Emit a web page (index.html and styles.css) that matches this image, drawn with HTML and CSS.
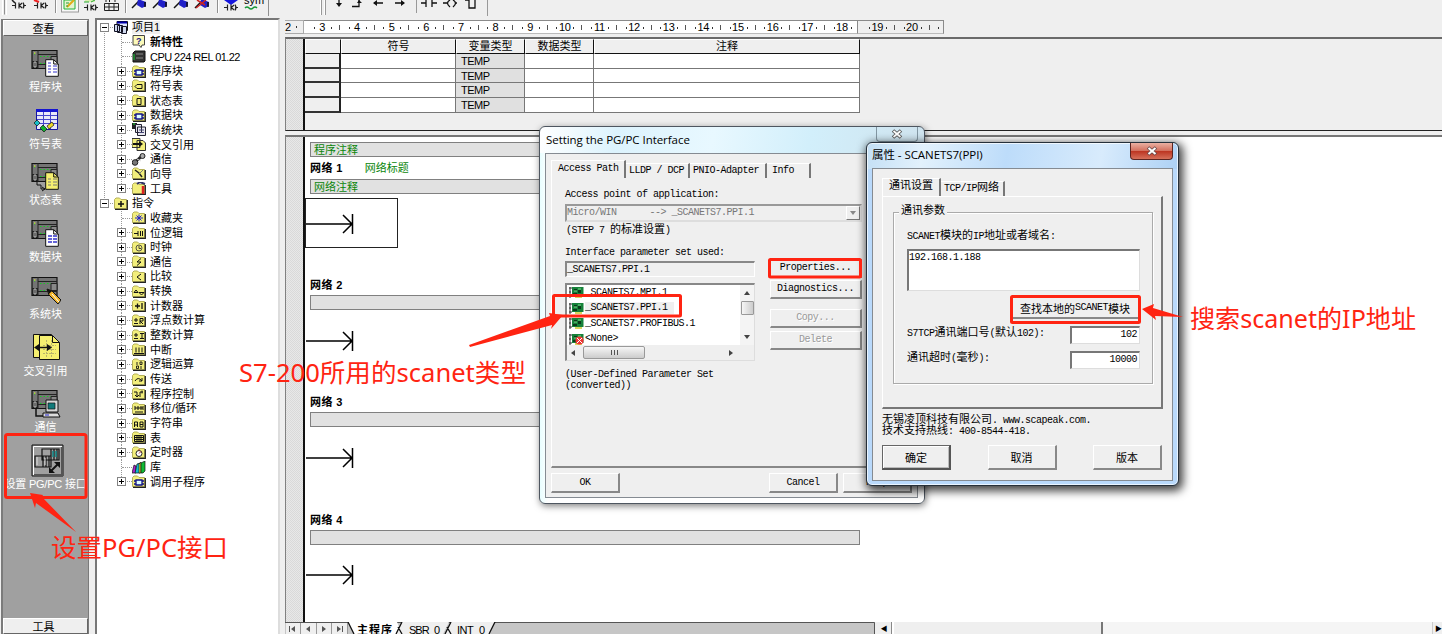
FILE: index.html
```html
<!DOCTYPE html>
<html lang="zh-CN">
<head>
<meta charset="utf-8">
<title>STEP 7-Micro/WIN</title>
<link rel="stylesheet" href="styles.css">
</head>
<body>
<svg class="defs" aria-hidden="true">
  <defs>
    <symbol id="folder" viewBox="0 0 14 13"><path d="M.5 11.5V2.5L2 1h3.500L7 2.500h5.500v9z" fill="#f2ee7c" stroke="#b5b05a"/><path d="M13.300 3v9.500H1" fill="none" stroke="#222" stroke-width="1.300"/></symbol>
    <symbol id="plus" viewBox="0 0 9 9"><rect x=".5" y=".5" width="8" height="8" fill="#fff" stroke="#848484"/><path d="M2 4.500h5M4.500 2v5" stroke="#000"/></symbol>
    <symbol id="minus" viewBox="0 0 9 9"><rect x=".5" y=".5" width="8" height="8" fill="#fff" stroke="#848484"/><path d="M2 4.500h5" stroke="#000"/></symbol>
    <symbol id="plc" viewBox="0 0 30 30"><path d="M1 1.500h25v18H1z" fill="#747474" stroke="#111" stroke-width="1.200"/><path d="M7 1v19M7 5.500h19M7 15.500h19" stroke="#222"/><path d="M1 12h6v7H1z" fill="#222"/><path d="M3 13v5h2v-5z" fill="none" stroke="#ddd" stroke-width=".8"/><path d="M3.500 4v2M9 7.500h11M9 14.500h8" stroke="#17c924" stroke-dasharray="1.500 2"/><path d="M3 4h1.500" stroke="#ffef3a"/><path d="M20 7.500h6v7h-6z" fill="#888" stroke="#222"/></symbol>
    <symbol id="doc" viewBox="0 0 14 18"><path d="M.7.7h8L13.300 5v12.300H.7z" fill="currentColor" stroke="#111"/><path d="M8.700.7V5h4.600" fill="none" stroke="#111"/></symbol>
    <symbol id="ladder" viewBox="0 0 14 9"><path d="M0 4.500h3M3.500 1.500v6M7.500 4.500L10 2M7.500 4.500L10 7M7 1.500v6M11 1.500q2 3 0 6M12.500 4.500h1.500" fill="none" stroke="#222" stroke-width="1.200"/></symbol>
    <symbol id="pin" viewBox="0 0 18 12"><path d="M1 9L9 1" stroke="#111" stroke-width="1.500"/><path d="M7 0l8 3v4l-4 2-5-3z" fill="#2020c8"/><path d="M14 3v5" stroke="#111" stroke-width="1.500"/></symbol>
    <symbol id="rung" viewBox="0 0 48 20"><path d="M0 10h47M46.500 0v20M37 1l9 9-9 9" fill="none" stroke="#000" stroke-width="1.500"/></symbol>
    <symbol id="card" viewBox="0 0 15 11"><path d="M1 0v11M0 1h3M0 5h2M0 9h3" stroke="#333"/><path d="M3 0h11.500v9H3z" fill="#16813a"/><path d="M5 2h3v2H5zM9 3h3v3H9zM4 6h4v2H4z" fill="#0b3a1a"/><path d="M5 4h3M9 2h3" stroke="#7ae087"/><path d="M6 10h7" stroke="#c8c828" stroke-width="1.500"/></symbol>
  </defs>
</svg>

<div class="app">
  <header class="toolbar">
    <svg class="strip-a" width="270" height="17" viewBox="0 0 270 17">
      <path d="M4.500 0v14.500M55.500 0v13M125.500 0v13M217.500 0v13M268.500 0v16" stroke="#909090"/><path d="M2.500 0v15M6.500 0v15M56.500 0v13M126.500 0v13M218.500 0v13" stroke="#fff"/>
      <use href="#ladder" x="12" y="1" width="14" height="9"/><use href="#ladder" x="34" y="1" width="14" height="9"/>
      <path d="M34 0l5 2" stroke="#e22" stroke-width="2"/><path d="M12 0l3 3" stroke="#222" stroke-width="1.500"/>
      <rect x="61.500" y="-1" width="17" height="13" fill="#f7f7f7" stroke="#9a9a9a"/><path d="M64 0h11v9H64z" fill="#e6f3cf" stroke="#22b33a"/><path d="M67 7l7-7" stroke="#e2ad16" stroke-width="2"/><path d="M66 3h3M66 6h2" stroke="#2c9b37"/>
      <use href="#ladder" x="84" y="3" width="14" height="9"/><path d="M85 0h10v2H85z" fill="#d9efb1"/><path d="M84 2h5M91 2l4-2" stroke="#29a836"/>
      <path d="M104.500 3.500h14v7h-14zM104.500 7h14M109 3.500v7M114 3.500v7M106 0v2M110 2q-2-1 0-2M115 0v2" stroke="#222" fill="none"/>
      <use href="#pin" x="131" y="-1" width="18" height="12"/><use href="#pin" x="152" y="-1" width="18" height="12"/><use href="#pin" x="173" y="-1" width="18" height="12"/><use href="#pin" x="194" y="-1" width="18" height="12"/>
      <path d="M196 8l10-8M197 0l8 5" stroke="#c22" stroke-width="1.500"/>
      <path d="M224 0h14l-7 5z" fill="#1616dd"/><use href="#ladder" x="224" y="3" width="14" height="9"/>
      <text x="244" y="4" class="sym">sym</text><path d="M245 8q2-2 4 0t4 0 4 0" stroke="#159734" fill="none" stroke-width="1.500"/>
    </svg>
    <svg class="strip-b" width="170" height="17" viewBox="320 0 170 17">
      <path d="M321.500 0v15M325.500 0v15M416.500 0v13M487.500 0v16" stroke="#999"/><path d="M320.500 0v15M324.500 0v15" stroke="#fff"/>
      <path d="M339 0v4M352 6.500h7V0M374 3h9M395 3h9M421 3h5M426 0v7M432 0v7M432 3h5M443 3h4M450 0q-5 3 0 7M453 0q5 3 0 7M456 3h1M465 0h4v8h6V0" stroke="#111" fill="none" stroke-width="1.300"/>
      <path d="M336 3h6l-3 4zM357 3l2-3 3 3zM377 0v6l-4-3zM401 0v6l4-3z" fill="#111"/>
    </svg>
  </header>

  <main class="workspace">
    <nav class="views">
      <div class="views-head">查看</div>
      <div class="views-list">
        <a class="view"><svg width="30" height="30" viewBox="0 0 30 30"><use href="#plc" width="30" height="30"/><use href="#doc" x="14" y="10" width="14" height="18" color="#fff"/><path d="M17 17h3M22 17h4M17 20h3M22 20h4M17 23h3M22 23h4M17 14h3" stroke="#33c"/></svg><span>程序块</span></a>
        <a class="view"><svg width="30" height="30" viewBox="0 0 30 30"><path d="M5.500 3.500h21v20h-21z" fill="#e8e8f8" stroke="#1414a0"/><path d="M5 4.500h22" stroke="#1414d0" stroke-width="3"/><path d="M6 9.500h20M6 13.500h20M6 17.500h20M12.500 6v17M19.500 6v17" stroke="#44c"/><path d="M3 17l3-3 3 3-3 3z" fill="#16c0c8" stroke="#111" stroke-width=".7"/><path d="M9 22l3-3 4 4-3 3z" fill="#12b030" stroke="#111" stroke-width=".7"/><path d="M16 20l5-4 2 3-5 4z" fill="#ecd827" stroke="#111" stroke-width=".7"/></svg><span>符号表</span></a>
        <a class="view"><svg width="30" height="30" viewBox="0 0 30 30"><use href="#plc" width="30" height="30"/><use href="#doc" x="14" y="10" width="14" height="18" color="#f5ef70"/><path d="M17 17h3M22 17h4M17 20h3M22 20h4M17 23h3M22 23h4" stroke="#777"/><path d="M6 20v3h4v4h4M11 25l3 2-3 2" fill="none" stroke="#111"/></svg><span>状态表</span></a>
        <a class="view"><svg width="30" height="30" viewBox="0 0 30 30"><use href="#plc" width="30" height="30"/><use href="#doc" x="14" y="10" width="14" height="18" color="#fff"/><path d="M17 17h4M22 17h4M17 20h4M22 20h4M17 23h4M22 23h4" stroke="#33c" stroke-width="1.300"/></svg><span>数据块</span></a>
        <a class="view"><svg width="30" height="30" viewBox="0 0 30 30"><use href="#plc" width="30" height="30"/><path d="M16 13l5 2 9 9-3 4-9-9z" fill="#f3b62c" stroke="#111"/><path d="M16 13l5 2-3 3z" fill="#111"/><path d="M21 18l7 8" stroke="#fff"/></svg><span>系统块</span></a>
        <a class="view"><svg width="30" height="30" viewBox="0 0 30 30"><path d="M2.500 1.500h18v23h-18z" fill="#f5ef70" stroke="#111"/><path d="M8.500 2.500h13l7 7v17h-20z" fill="#f5ef70" stroke="#111"/><path d="M21.500 2.500v7h7" fill="none" stroke="#111"/><path d="M12 12.500h13M12 16.500h13M12 20.500h13M15.500 7v17M20.500 7v17" stroke="#b9b46a" stroke-dasharray="2 1"/><path d="M5 14.500h14" stroke="#111" stroke-width="1.500"/><path d="M8 11v7l-5-3.500zM16 11v7l5-3.500z" fill="#111"/></svg><span>交叉引用</span></a>
        <a class="view"><svg width="30" height="30" viewBox="0 0 30 30"><use href="#plc" width="30" height="30"/><path d="M5 20v7h10" stroke="#111" fill="none" stroke-width="1.500"/><path d="M15 11h12v12H15z" fill="#d6d6d6" stroke="#111"/><path d="M17 14h7v6h-7z" fill="#107a7a" stroke="#111" stroke-width=".7"/><path d="M12 24h15l2 4H12z" fill="#ddd" stroke="#111"/><path d="M14 26h4" stroke="#22c"/></svg><span>通信</span></a>
        <a class="view"><svg width="34" height="34" viewBox="0 0 34 34"><path d="M1 1h31v31H1z" fill="#a0a0a0" stroke="#111"/><path d="M2.500 31V2.500H31" fill="none" stroke="#fff"/><path d="M31 3v28H3" fill="none" stroke="#555" stroke-width="2"/><path d="M11 5h17v11H11zM20 5v11M23 5v11M26 5v11M4 12h16v11H4zM12 12v11M15 12v11M18 12v11" fill="none" stroke="#111" stroke-width="1.200"/><path d="M22 7v6M25 7v6" stroke="#188" stroke-width="1.500"/><path d="M6 13v8M14 14v7" stroke="#ddd"/><path d="M19 28l9-9" stroke="#111" stroke-width="2"/><path d="M23 18h6v6zM18 23v6h6z" fill="#111"/></svg><span>设置 PG/PC 接口</span></a>
      </div>
      <div class="views-head">工具</div>
    </nav>

    <aside class="tree">
      <div class="branch root">
        <div class="row top"><svg class="tg"><use href="#minus"/></svg><svg class="ic"  viewBox="0 0 14 13"><path d="M3 .5h10.500v9H3z" fill="#dde6ff" stroke="#111"/><path d="M3 1.500h10" stroke="#00a" stroke-width="2"/><path d="M.5 3.500h5v7h-5zM3.500 4.500h5v7h-5zM7.500 5.500h5v7h-5z" fill="#cfd8ee" stroke="#112"/></svg><span class="lit">项目1</span></div>
        <div class="branch">
        <div class="row"><svg class="tg"></svg><svg class="ic" viewBox="0 0 14 13"><path d="M1 .5h11.500V10H10l-1 2.500L7 10H1z" fill="#fbf9b9" stroke="#444"/><text x="4" y="9" class="glyph">?</text></svg><span class="bold">新特性</span></div>
        <div class="row"><svg class="tg"></svg><svg class="ic" viewBox="0 0 14 13"><path d="M1 3l2-2h10v10l-1 1H1z" fill="#333" stroke="#111"/><path d="M4 4h7M4 8h7" stroke="#888"/><path d="M2 4v6" stroke="#1c3"/></svg><span class="cpu">CPU 224 REL 01.22</span></div>
        <div class="row"><svg class="tg"><use href="#plus"/></svg><svg class="ic" viewBox="0 0 14 13"><use href="#folder"/><path d="M4 5h6v5H4zM2 6h2M2 9h2M10 6h2M10 9h2" fill="#dff" stroke="#118" stroke-width="1.300"/></svg><span>程序块</span></div>
        <div class="row"><svg class="tg"><use href="#plus"/></svg><svg class="ic" viewBox="0 0 14 13"><use href="#folder"/><path d="M3 7.500L5 5.500h5v4H5z" fill="none" stroke="#111"/></svg><span>符号表</span></div>
        <div class="row"><svg class="tg"><use href="#plus"/></svg><svg class="ic" viewBox="0 0 14 13"><use href="#folder"/><path d="M5 4.500h4v6H5z" fill="none" stroke="#111"/></svg><span>状态表</span></div>
        <div class="row"><svg class="tg"><use href="#plus"/></svg><svg class="ic" viewBox="0 0 14 13"><use href="#folder"/><path d="M4 5h6v5H4zM2 6h2M2 9h2M10 6h2M10 9h2" fill="#dff" stroke="#118" stroke-width="1.300"/></svg><span>数据块</span></div>
        <div class="row"><svg class="tg"><use href="#plus"/></svg><svg class="ic" viewBox="0 0 14 13"><path d="M0 0h5v6H0z" fill="#222"/><path d="M1 1h2" stroke="#1d3"/><path d="M3.500 1.500h6v8h-6zM5.500 4h8v8.500h-8z" fill="#e6e6ee" stroke="#223"/><path d="M7 7h5M7 9.500h5" stroke="#447"/></svg><span>系统块</span></div>
        <div class="row"><svg class="tg"><use href="#plus"/></svg><svg class="ic" viewBox="0 0 14 13"><path d="M0 .5h8v9H0zM5 2.500h6l2.500 2.500v7.500H5z" fill="#f2ee7c" stroke="#333"/><path d="M1 6h8" stroke="#111" stroke-width="2"/><path d="M7 3v6l4-3z" fill="#111"/></svg><span>交叉引用</span></div>
        <div class="row"><svg class="tg"><use href="#plus"/></svg><svg class="ic" viewBox="0 0 14 13"><path d="M2 10l9-8" stroke="#222" stroke-width="3"/><circle cx="10.500" cy="3" r="2.500" fill="#aaa" stroke="#222"/><circle cx="3" cy="9.500" r="2.800" fill="#777" stroke="#222"/><path d="M5 6l4 2" stroke="#ddd"/></svg><span>通信</span></div>
        <div class="row"><svg class="tg"><use href="#plus"/></svg><svg class="ic" viewBox="0 0 14 13"><use href="#folder"/><path d="M3 3l4 3 3 4" fill="none" stroke="#222" stroke-width="1.500"/><path d="M11 3L7 7" stroke="#777"/></svg><span>向导</span></div>
        <div class="row"><svg class="tg"><use href="#plus"/></svg><svg class="ic" viewBox="0 0 14 13"><use href="#folder"/><path d="M5 2l3-2 5 2" stroke="#336" stroke-width="2" fill="none"/><path d="M11 4v8" stroke="#d22" stroke-width="2.500"/></svg><span>工具</span></div>
        </div>
      </div>
      <div class="branch root last">
        <div class="row top"><svg class="tg"><use href="#minus"/></svg><svg class="ic" viewBox="0 0 14 13"><use href="#folder"/><path d="M4 7h6M7 4v6" stroke="#111" stroke-width="1.500"/></svg><span>指令</span></div>
        <div class="branch">
        <div class="row"><svg class="tg"></svg><svg class="ic" viewBox="0 0 14 13"><use href="#folder"/><path d="M3 7h8M7 3.500v7M4.500 4.500l5 5M9.500 4.500l-5 5" stroke="#22c"/></svg><span>收藏夹</span></div>
        <div class="row"><svg class="tg"><use href="#plus"/></svg><svg class="ic" viewBox="0 0 14 13"><use href="#folder"/><path d="M2 7.500h4M6 5v5M8.500 5v5M10.500 5v5" stroke="#111"/></svg><span>位逻辑</span></div>
        <div class="row"><svg class="tg"><use href="#plus"/></svg><svg class="ic" viewBox="0 0 14 13"><use href="#folder"/><circle cx="7" cy="7" r="3" fill="none" stroke="#554"/><path d="M7 5v2.500h2" fill="none" stroke="#443"/></svg><span>时钟</span></div>
        <div class="row"><svg class="tg"><use href="#plus"/></svg><svg class="ic" viewBox="0 0 14 13"><use href="#folder"/><path d="M9 3.500L5 7h4l-4 3.500" fill="none" stroke="#111"/></svg><span>通信</span></div>
        <div class="row"><svg class="tg"><use href="#plus"/></svg><svg class="ic" viewBox="0 0 14 13"><use href="#folder"/><path d="M9 4L5 7l4 3" fill="none" stroke="#111"/></svg><span>比较</span></div>
        <div class="row"><svg class="tg"><use href="#plus"/></svg><svg class="ic" viewBox="0 0 14 13"><use href="#folder"/><path d="M2 7.500h4L4 5zM7 7.500h5L9.500 10z" fill="none" stroke="#111"/></svg><span>转换</span></div>
        <div class="row"><svg class="tg"><use href="#plus"/></svg><svg class="ic" viewBox="0 0 14 13"><use href="#folder"/><path d="M3 7h5M5.500 4.500v5M10 4v6" stroke="#111" stroke-width="1.300"/></svg><span>计数器</span></div>
        <div class="row"><svg class="tg"><use href="#plus"/></svg><svg class="ic" viewBox="0 0 14 13"><use href="#folder"/><path d="M2 6h4M4 4v4M2 9.500h4M8 10V4.500h3v2.500H8l3 3" fill="none" stroke="#111"/></svg><span>浮点数计算</span></div>
        <div class="row"><svg class="tg"><use href="#plus"/></svg><svg class="ic" viewBox="0 0 14 13"><use href="#folder"/><path d="M2 6h4M4 4v4M2 9.500h4M8 4.500h4M8 9.500h4M10 4.500v5" stroke="#111"/></svg><span>整数计算</span></div>
        <div class="row"><svg class="tg"><use href="#plus"/></svg><svg class="ic" viewBox="0 0 14 13"><use href="#folder"/><path d="M4 4.500v5M7 4.500v5M10 4.500v5M2 10.500h10" stroke="#111"/></svg><span>中断</span></div>
        <div class="row"><svg class="tg"><use href="#plus"/></svg><svg class="ic" viewBox="0 0 14 13"><use href="#folder"/><path d="M5 4v3M8 4h2v2.500H8zM4.500 8h2v2.500h-2zM9 8v3" fill="none" stroke="#111" stroke-width=".9"/></svg><span>逻辑运算</span></div>
        <div class="row"><svg class="tg"><use href="#plus"/></svg><svg class="ic" viewBox="0 0 14 13"><use href="#folder"/><path d="M3 8q3-5 7 0M10 5v3H7" fill="none" stroke="#111"/></svg><span>传送</span></div>
        <div class="row"><svg class="tg"><use href="#plus"/></svg><svg class="ic" viewBox="0 0 14 13"><use href="#folder"/><path d="M2 5h3v5M3 8l2 2 2-2M8 10V5h3M10 3.500v3" fill="none" stroke="#111"/></svg><span>程序控制</span></div>
        <div class="row"><svg class="tg"><use href="#plus"/></svg><svg class="ic" viewBox="0 0 14 13"><use href="#folder"/><path d="M3 4v4M6 4v4M9 4v4M11 4v4M3 6h8M3 10h8" stroke="#111"/></svg><span>移位/循环</span></div>
        <div class="row"><svg class="tg"><use href="#plus"/></svg><svg class="ic" viewBox="0 0 14 13"><use href="#folder"/><path d="M2.500 10V5h3v5M2.500 8h3M8 5h3v5H8zM8 7.500h3" fill="none" stroke="#111"/></svg><span>字符串</span></div>
        <div class="row"><svg class="tg"><use href="#plus"/></svg><svg class="ic" viewBox="0 0 14 13"><use href="#folder"/><path d="M2.500 4.500h9v6h-9zM2.500 6.500h9M2.500 8.500h9M5 4v6M7 4v6M9 4v6" fill="none" stroke="#111"/></svg><span>表</span></div>
        <div class="row"><svg class="tg"><use href="#plus"/></svg><svg class="ic" viewBox="0 0 14 13"><use href="#folder"/><circle cx="7" cy="7.500" r="3" fill="#fff" stroke="#222"/><path d="M7 7.500l2-2M7 3v1.500" stroke="#b22"/></svg><span>定时器</span></div>
        <div class="row"><svg class="tg"></svg><svg class="ic" viewBox="0 0 14 13"><path d="M0 12l2-8 2 1v7z" fill="#a2c" stroke="#111" stroke-width=".7"/><path d="M3 12l2-9 3-1v10z" fill="#1bc" stroke="#111" stroke-width=".7"/><path d="M7 12V3l2-2v11z" fill="#ee3" stroke="#111" stroke-width=".7"/><path d="M9 12V2l4-2v10l-2 2z" fill="#1b3" stroke="#111" stroke-width=".7"/></svg><span>库</span></div>
        <div class="row"><svg class="tg"><use href="#plus"/></svg><svg class="ic" viewBox="0 0 14 13"><use href="#folder"/><path d="M4 5h6v5H4zM2 6h2M2 9h2M10 6h2M10 9h2" fill="#dff" stroke="#118" stroke-width="1.300"/></svg><span>调用子程序</span></div>
        </div>
      </div>
    </aside>

    <section class="editor">
      <div class="ruler">
        <div class="r-left"><span>2</span><i></i></div>
        <div class="r-main"><b>3</b><b>4</b><b>5</b><b>6</b><b>7</b><b>8</b><b>9</b><b>10</b><b>11</b><b>12</b><b>13</b><b>14</b><b>15</b><b>16</b><b>17</b><b>18</b></div>
        <div class="r-rest"><b>19</b><b>20</b><i></i></div>
      </div>
      <div class="pane vars">
        <div class="gutter"></div>
        <div class="grid">
          <div class="h"></div><div class="h">符号</div><div class="h">变量类型</div><div class="h">数据类型</div><div class="h">注释</div>
          <div class="n"></div><div></div><div class="t">TEMP</div><div></div><div></div>
          <div class="n"></div><div></div><div class="t">TEMP</div><div></div><div></div>
          <div class="n"></div><div></div><div class="t">TEMP</div><div></div><div></div>
          <div class="n"></div><div></div><div class="t">TEMP</div><div></div><div></div>
        </div>
      </div>
      <div class="pane code">
        <div class="gutter"></div>
        <div class="networks">
          <div class="bar first">程序注释</div>
          <div class="net one"><h4>网络 1<span>网络标题</span></h4><div class="bar">网络注释</div><div class="cursor"><svg width="48" height="20"><use href="#rung"/></svg></div></div>
          <div class="net"><h4>网络 2</h4><div class="bar"></div><svg width="48" height="20"><use href="#rung"/></svg></div>
          <div class="net"><h4>网络 3</h4><div class="bar"></div><svg width="48" height="20"><use href="#rung"/></svg></div>
          <div class="net"><h4>网络 4</h4><div class="bar"></div><svg width="48" height="20"><use href="#rung"/></svg></div>
        </div>
      </div>
      <footer class="tabs">
        <svg width="590" height="12" viewBox="286 622 590 12">
          <path d="M286 622h590v12H286z" fill="#c6c6c6"/><path d="M286 622.500h589.500V634" fill="none" stroke="#555"/>
          <path d="M287 623h62v11h-62z" fill="#efefef"/><path d="M301.500 623v11M317.500 623v11M332.500 623v11M348.500 623v11" stroke="#999"/>
          <path d="M296 626v6l-4-3zM311 626v6l-4-3zM323 626v6l4-3zM338 626v6l4-3z" fill="#555"/><path d="M290.500 626v6M343.500 626v6" stroke="#555"/>
          <path d="M349 622l6 12h48l-5-12z" fill="#fff"/><path d="M397 634l6-12h47l-6 12zM446 634l6-12h44l-6 12z" fill="#efefef"/><path d="M349 622l6 12M397 634l6-12M399 627l4 7M446 634l6-12M448 627l4 7M490 634l6-12" fill="none" stroke="#111" stroke-width="1.300"/>
          <text x="358" y="634" class="tab-main" textLength="35">主程序</text><text x="410" y="634" class="tab" textLength="31">SBR_0</text><text x="458" y="634" class="tab" textLength="28">INT_0</text>
        </svg>
        <div class="scroll"><span class="sb">◀</span><span class="thumb"></span><span class="track"></span><span class="sb">▶</span></div>
      </footer>
    </section>
  </main>

  <section class="window access">
    <div class="caption"><span>Setting the PG/PC Interface</span><div class="close"><svg width="12" height="10" viewBox="0 0 12 10"><path d="M2 1.500l8 7M10 1.500l-8 7" stroke="#555" stroke-width="3.600"/><path d="M2.500 2l7 6M9.500 2l-7 6" stroke="#fff" stroke-width="1.700"/></svg></div></div>
    <div class="client">
      <div class="tabbar"><span class="on">Access Path</span><span>LLDP / DCP</span><span>PNIO-Adapter</span><span class="w">Info</span></div>
      <div class="page">
        <p class="l1">Access point of application:</p>
        <div class="combo"><pre>Micro/WIN      --&gt; _SCANETS7.PPI.1</pre><i></i></div>
        <p class="l2">(STEP 7 <em>的标准设置</em>)</p>
        <div class="cols">
          <div class="left">
            <p class="l3">Interface parameter set used:</p>
            <div class="field">_SCANETS7.PPI.1</div>
            <div class="list">
              <ul><li><svg width="15" height="11"><use href="#card"/></svg>_SCANETS7.MPI.1</li><li class="sel"><svg width="15" height="11"><use href="#card"/></svg><b>_SCANETS7.PPI.1</b></li><li><svg width="15" height="11"><use href="#card"/></svg>_SCANETS7.PROFIBUS.1</li><li><svg width="15" height="11" viewBox="0 0 15 11"><use href="#card"/><circle cx="10.500" cy="6.500" r="4" fill="#e33"/><path d="M8 4l5 5M13 4L8 9" stroke="#fff"/></svg>&lt;None&gt;</li></ul>
              <div class="vs"><i class="up"></i><i class="vt"></i><i class="dn"></i></div>
              <div class="hs"><i class="lf"></i><i class="ht"></i><i class="rt"></i></div>
            </div>
            <p class="l4">(User-Defined Parameter Set<br>(converted))</p>
          </div>
          <div class="side"><button>Properties...</button><button>Diagnostics...</button><button class="off">Copy...</button><button class="off">Delete</button></div>
        </div>
      </div>
      <div class="actions"><button>OK</button><button class="cancel">Cancel</button><button>Help</button></div>
    </div>
  </section>

  <section class="window props">
    <div class="caption"><span>属性 - SCANETS7(PPI)</span><div class="close"><svg width="12" height="10" viewBox="0 0 12 10"><path d="M2 1.500l8 7M10 1.500l-8 7" stroke="#6b4a4a" stroke-width="3.600"/><path d="M2.500 2l7 6M9.500 2l-7 6" stroke="#fff" stroke-width="2"/></svg></div></div>
    <div class="client">
      <div class="tabbar"><span class="on"><em>通讯设置</em></span><span>TCP/IP<em>网络</em></span></div>
      <div class="page">
        <div class="group"><span class="legend"><em>通讯参数</em></span>
          <p class="g1">SCANET<em>模块的</em>IP<em>地址或者域名</em>:</p>
          <div class="area">192.168.1.188</div>
          <button class="find"><em>查找本地的</em>SCANET<em>模块</em></button>
          <div class="line"><span>S7TCP<em>通讯端口号</em>(<em>默认</em>102):</span><div class="num">102</div></div>
          <div class="line"><span><em>通讯超时</em>(<em>毫秒</em>):</span><div class="num">10000</div></div>
        </div>
      </div>
      <p class="about"><em>无锡凌顶科技有限公司</em>. www.scapeak.com.<br><em>技术支持热线</em>: 400-8544-418.</p>
      <div class="actions"><button class="def"><em>确定</em></button><button><em>取消</em></button><button><em>版本</em></button></div>
    </div>
  </section>

  <svg class="notes" width="1442" height="634" viewBox="0 0 1442 634">
    <g fill="none" stroke="#ff2412" stroke-width="3"><rect x="5.500" y="434.500" width="80.500" height="63" rx="2"/><rect x="553.500" y="295.500" width="127" height="20.500" rx="1"/><rect x="769.500" y="259.500" width="91" height="17.500" rx="1"/><rect x="1011.500" y="296.500" width="128" height="26" rx="1"/></g>
    <g fill="#ff2412"><path d="M30 493l13 2-1 2 34 35-40-29-1 5z"/><path d="M563 315l-14-2 1 3-81 29 1 2 82-22-1 4z"/><path d="M1142 309l12-5-1 4 30 9-28-1 1 4z"/>
    <text x="51" y="557" textLength="177" lengthAdjust="spacingAndGlyphs">设置PG/PC接口</text><text x="239" y="382" textLength="287" lengthAdjust="spacingAndGlyphs">S7-200所用的scanet类型</text><text x="1190" y="328" textLength="226" lengthAdjust="spacingAndGlyphs">搜索scanet的IP地址</text></g>
  </svg>
</div>
</body>
</html>
```
FILE: styles.css
```css
* { box-sizing: border-box; }
body { margin: 0; overflow: hidden; background: #efefef; color: #000; font: 11px/14px "Liberation Sans", "Noto Sans CJK SC", sans-serif; }
p, h4, ul, pre { margin: 0; padding: 0; font: inherit; }
i, em { font-style: normal; }
.defs { position: absolute; width: 0; height: 0; }
.app { position: relative; width: 1442px; height: 634px; display: flex; flex-direction: column; overflow: hidden; }

.toolbar { height: 17px; display: flex; gap: 50px; flex: none; }
.toolbar svg { display: block; flex: none; }
.sym { font: 11px "Liberation Sans", sans-serif; }

.workspace { flex: 1; min-height: 0; display: flex; }

/* Navigation bar */
.views { width: 88px; margin: 2px 0 0 1px; border: solid #7b7b7b; border-width: 1px 1px 0 2px; display: flex; flex-direction: column; flex: none; }
.views-head { height: 16px; line-height: 16px; text-align: center; background: #efefef; border: 1px solid #fff; border-right-color: #666; border-bottom: 1px solid #666; flex: none; padding-right: 4px; }
.views-head:last-child { line-height: 17px; }
.views-list { flex: 1; background: #a0a0a0; padding-top: 1px; overflow: hidden; }
.view { height: 56.750px; display: flex; flex-direction: column; align-items: center; justify-content: flex-end; color: #fff; }
.view svg { display: block; flex: none; }
.view span { line-height: 14px; white-space: nowrap; margin-top: 1px; }
.view:last-child span { margin-top: -1px; letter-spacing: -.2px; }
.view:last-child svg { margin-left: 4px; }

/* Project tree */
.tree { width: 185px; margin: 1px 0 0 6px; border: solid #777; border-width: 2px 0 0 2px; border-right: 2px solid #ddd; background: #fff; flex: none; padding-left: 3px; overflow: hidden; }
.row { height: 14.660px; display: flex; align-items: center; white-space: nowrap; position: relative; }
.row .tg { width: 9px; height: 9px; flex: none; position: relative; z-index: 1; }
.row .ic { width: 14px; height: 13px; margin: 0 4px 0 6px; flex: none; position: relative; }
.row.top .ic { margin-right: 4px; margin-left: 5px; }
.row::before { content: ""; position: absolute; left: 5px; top: 7px; width: 10px; border-top: 1px dotted #999; }
.branch .branch { margin-left: 13px; padding-left: 4px; }
.branch .branch .row::after { content: ""; position: absolute; left: 4px; top: 0; height: 15px; border-left: 1px dotted #999; }
.branch .branch .row:last-child::after { height: 7px; }
.root { position: relative; }
.root:first-child::before { content: ""; position: absolute; left: 4px; top: 8px; height: 172px; border-left: 1px dotted #999; }
.lit { background: #efefef; line-height: 13px; }
.bold { font-weight: 700; }
.cpu { letter-spacing: -.55px; }
.glyph { font: bold 9px "Liberation Sans", sans-serif; fill: #118; }

/* Editor */
.editor { flex: 1; min-width: 0; margin-left: 5px; display: flex; flex-direction: column; }
.ruler { display: flex; height: 14px; margin-top: 3px; font-size: 11px; line-height: 14px; }
.r-left { width: 19px; border: 1px solid #aaa; border-width: 1px 1px 1px 0; display: flex; align-items: center; gap: 5px; }
.r-left i { width: 1px; height: 2px; background: #333; }
.r-main, .r-rest { display: flex; border: 1px solid #8a8a8a; border-left: 0; border-bottom-color: #bbb; overflow: hidden; }
.r-main { width: 554px; background: #fff; padding-left: 1px; }
.r-rest { width: 86px; padding-left: 2px; }
.r-rest i { width: 1px; height: 2px; margin: 6px 0 0 9px; background: #333; }
.ruler b { width: 34.650px; flex: none; font-weight: 400; text-align: center; line-height: 13px; letter-spacing: -.2px; background: linear-gradient(#333, #333) 9px 6px / 1px 2px no-repeat, linear-gradient(#333, #333) 26px 6px / 1px 2px no-repeat, linear-gradient(#555, #555) 34px 4px / 1px 5px no-repeat; }
.pane { display: flex; border-left: 1px solid #808080; flex: none; }
.gutter { width: 19px; background: repeating-conic-gradient(#d9d9d9 0 25%, #e8e8e8 0 50%) 0 0 / 2px 2px; border-right: 2px solid #111; flex: none; }
.vars { height: 94px; margin-top: 3px; border-top: 2px solid #6a6a6a; border-bottom: 1px solid #222; }
.grid { display: grid; grid-template-columns: 36px 115px 69px 69px 266px; grid-template-rows: 15px 14.700px 14.700px 14.700px 14.700px; align-content: start; }
.grid > div { background: #fff; border-right: 1px solid #777; border-bottom: 1px solid #777; line-height: 14px; }
.grid > .h { background: #efefef; border-right: 1.500px solid #111; border-bottom: 1.500px solid #111; border-top: 1px solid #fff; border-left: 1px solid #fff; text-align: center; line-height: 13px; }
.grid > .n { background: #efefef; border-right: 2px solid #222; border-bottom: 2px solid #333; }
.grid > .t { background: #e0e0e0; padding-left: 5px; letter-spacing: -.5px; }
.code { flex: 1; margin-top: 4px; background: #fff; border-top: 2px solid #777; min-height: 0; overflow: hidden; }
.networks { padding: 5px 0 0 5px; flex: 1; }
.bar { width: 550px; height: 15px; border: 1px solid #808080; background: #e1e1e1; color: #0a860a; line-height: 14px; padding-left: 3px; }
.net { height: 117.300px; }
.net h4 { font-weight: 700; height: 17px; line-height: 14px; white-space: pre; letter-spacing: .4px; }
.net h4 span { color: #0a860a; font-weight: 400; margin-left: 22px; letter-spacing: 0; }
.net > svg { display: block; margin: 20.500px 0 0 -4px; }
.net.one { padding-top: 4px; height: 121.200px; }
.net.one h4 { height: 18px; }
.cursor { width: 93px; height: 50px; margin: 4px 0 0 -5px; border: 1px solid #222; padding-top: 15px; }
.cursor svg { display: block; }
.tabs { height: 12px; display: flex; flex: none; }
.tabs > svg { flex: none; }
.tab-main { font: 700 11px "Noto Sans CJK SC", sans-serif; }
.tab { font: 11px "Liberation Sans", sans-serif; }
.scroll { flex: 1; display: flex; margin-left: 2px; background: #f5f5f5; font-size: 7px; line-height: 13px; }
.sb { width: 15px; text-align: center; background: #efefef; border-right: 1px solid #888; }
.scroll .sb:last-child { width: 10px; border-left: 1px solid #ccc; border-right: 0; padding-left: 2px; }
.thumb { width: 211px; background: #efefef; border-left: 2px solid #fff; border-right: 2px solid #777; }
.track { flex: 1; }

/* Dialogs */
.window { position: absolute; border: 1px solid #4e5660; border-radius: 6px; font: 10px/12px "Liberation Mono", "Noto Sans CJK SC", monospace; letter-spacing: -.5px; }
.window em { font: 11px/0 "Noto Sans CJK SC", sans-serif; letter-spacing: 0; }
.caption { font: 11.500px/26px "Open Sans", "Noto Sans CJK SC", sans-serif; letter-spacing: -.05px; display: flex; justify-content: space-between; }
.close { display: flex; justify-content: center; align-items: center; }
.client { border: 1px solid #858b92; background: #efefef; }
.window button { display: flex; align-items: center; justify-content: center; padding: 0; margin: 0; font: inherit; letter-spacing: inherit; color: #000; background: #efefef; border: 1px solid #fff; border-right: 2px solid #888; border-bottom: 2px solid #888; white-space: nowrap; }
.tabbar { display: flex; align-items: flex-end; }
.tabbar span { border-top: 1px solid #fff; border-right: 2px solid #777; height: 15px; line-height: 14px; white-space: nowrap; padding-left: 3px; }
.tabbar .on { border-left: 1px solid #fff; height: 18px; line-height: 16px; }

.access { left: 539px; top: 126px; width: 386px; height: 378px; background: linear-gradient(100deg, #fff, #dcf3fd 20%, #e8f8ff 45%, #d2effb 70%, #cfe3ee) 0 0 / 100% 26px no-repeat, linear-gradient(90deg, #e8feff, #fff 8px); box-shadow: 1px 2px 7px rgba(0,0,0,.5); }
.access .caption { height: 26px; padding-left: 6px; }
.access .close { width: 42px; height: 15px; margin-right: 6px; border: 1px solid #8296a2; border-top: 0; border-radius: 0 0 4px 4px; }
.access .client { margin: 0 6px 0 5px; height: 345px; padding-left: 5px; }
.access .tabbar { height: 24px; }
.access .tabbar .on { width: 75px; padding-left: 6px; }
.access .tabbar span:nth-child(2) { width: 64px; }
.access .tabbar span:nth-child(3) { width: 77px; }
.access .tabbar .w { width: 44px; padding-left: 5px; }
.access .page { height: 290px; margin-right: 6px; border-left: 1px solid #fff; border-bottom: 2px solid #888; padding: 11px 0 0 13px; }
.combo { width: 297px; height: 18px; margin-top: 3px; border: 2px solid #999; border-right-color: #ddd; border-bottom-color: #ddd; color: #777; display: flex; justify-content: space-between; line-height: 14px; }
.combo i { width: 14px; border: 1px solid #fff; border-right-color: #777; border-bottom-color: #777; display: flex; align-items: center; justify-content: center; }
.combo i::before { content: ""; border: 3px solid transparent; border-top: 4px solid #888; border-bottom: 0; }
.l1 { height: 12px; }
.l2 { height: 12px; margin-top: 3px; padding-left: 1px; }
.cols { display: flex; margin-top: 10px; }
.left { width: 190px; }
.l3 { height: 12px; }
.field { height: 16px; margin-top: 2px; border: 2px solid #888; border-right: 1px solid #fff; border-bottom: 1px solid #fff; line-height: 13px; }
.list { height: 78px; margin-top: 6px; border: 2px solid #888; border-right: 1px solid #ddd; border-bottom: 1px solid #ddd; background: #fff; display: grid; grid-template-columns: 1fr 14px; grid-template-rows: 60px 1fr; }
.list ul { list-style: none; overflow: hidden; padding-left: 2px; }
.list li { height: 15.500px; display: flex; align-items: center; gap: 1px; }
.list li b { font-weight: 400; background: #efefef; padding-right: 6px; }
.vs { background: #f4f4f4; display: flex; flex-direction: column; align-items: center; }
.vs i, .hs i { display: block; flex: none; }
.up { border: 3px solid transparent; border-bottom: 4px solid #444; border-top: 0; margin-top: 6px; }
.dn { border: 3px solid transparent; border-top: 4px solid #444; border-bottom: 0; margin-top: 20px; }
.vt { width: 13px; height: 14px; margin-top: 6px; border: 1px solid #999; background: linear-gradient(90deg, #f6f6f6, #ccc); border-radius: 1px; }
.hs { grid-column: 1 / 3; background: #efefef; display: flex; align-items: center; padding: 0 21px 0 4px; }
.lf { border: 3px solid transparent; border-right: 4px solid #444; border-left: 0; }
.rt { border: 3px solid transparent; border-left: 4px solid #444; border-right: 0; margin-left: auto; }
.ht { width: 62px; height: 13px; margin-left: 8px; border: 1px solid #999; border-radius: 2px; background: repeating-linear-gradient(90deg, #555 0 1px, transparent 1px 3px) 27px 3px / 8px 5px no-repeat, linear-gradient(#f6f6f6, #ccc); }
.l4 { margin-top: 8px; line-height: 11px; white-space: nowrap; }
.side { margin-left: 15px; padding-top: 12px; }
.side button { width: 92px; height: 19px; }
.side button:nth-child(2) { margin-top: 2px; }
.side button:nth-child(3) { margin-top: 10px; }
.side button:nth-child(4) { margin-top: 3px; }
.side .off { color: #999; text-shadow: 1px 1px #fff; }
.access .actions { display: flex; margin-top: 5px; }
.access .actions button { width: 69px; height: 20px; }
.access .cancel { margin: 0 5px 0 149px; }

.props { left: 866px; top: 142px; width: 313px; height: 344px; background: linear-gradient(100deg, #c3dff5, #e2f1fc 18%, #bddcfa 45%, #d8ebfc 75%, #add1f5) 0 0 / 100% 26px no-repeat, #b9d9fb; border-color: #26303a; box-shadow: 2px 3px 10px 2px rgba(0,0,0,.75), inset 0 0 0 1px rgba(255,255,255,.7); }
.props .caption { height: 25px; line-height: 23px; padding-left: 5px; font-size: 11.500px; letter-spacing: -.05px; }
.props .close { width: 43px; height: 17px; margin-right: 5px; border: 1px solid #5b2521; border-top: 0; border-radius: 0 0 4px 4px; background: linear-gradient(#eab0a2, #d3715f 48%, #bb3320 50%, #d6705a); }
.props .client { margin: 0 5px; height: 313px; padding: 0 9px; }
.props .tabbar { height: 27px; }
.props .tabbar .on { width: 59px; padding-left: 6px; }
.props .tabbar span:nth-child(2) { width: 64px; }
.props .page { height: 213px; border: 1px solid #fff; border-right: 2px solid #777; border-bottom: 2px solid #777; padding: 15px 8px 0 10px; }
.group { height: 172px; border: 1px solid #aaa; box-shadow: inset 1px 1px #fff, 1px 1px #fff; padding: 0 12px 0 13px; position: relative; display: flex; flex-direction: column; }
.legend { position: absolute; left: 5px; top: -7px; background: #efefef; padding: 0 2px; }
.g1 { height: 12px; margin-top: 18px; white-space: nowrap; }
.area { height: 42px; margin-top: 6px; background: #fff; border: 2px solid #777; border-right: 1px solid #ddd; border-bottom: 1px solid #ddd; line-height: 13px; }
.window .find { width: 129px; height: 22px; margin-top: 6px; align-self: flex-end; }
.line { height: 19px; margin-top: 7px; display: flex; justify-content: space-between; line-height: 16px; }
.line + .line { margin-top: 6px; }
.num { width: 70px; height: 18px; background: #fff; border: 2px solid #777; border-right: 1px solid #ddd; border-bottom: 1px solid #ddd; text-align: right; padding-right: 2px; line-height: 14px; }
.about { line-height: 11px; height: 22px; margin-top: 6px; white-space: nowrap; }
.props .actions { display: flex; justify-content: space-between; margin-top: 8px; padding-right: 1px; }
.props .actions button { width: 69px; height: 25px; }
.window .def { border: 1px solid #666; border-right: 2px solid #555; border-bottom: 2px solid #555; box-shadow: inset 1px 1px #fff, inset -1px -1px #bbb; }

.notes { position: absolute; left: 0; top: 0; pointer-events: none; }
.notes text { font: 400 25px "Noto Sans", "Noto Sans CJK SC", sans-serif; }
```
